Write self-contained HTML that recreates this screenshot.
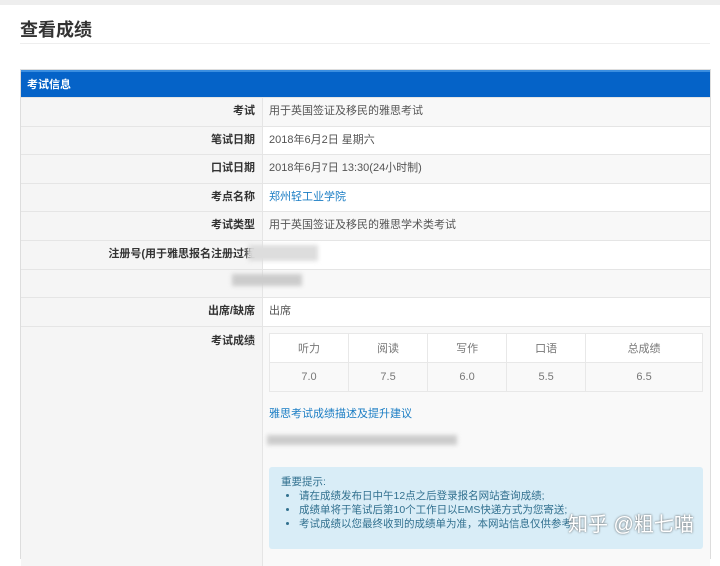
<!DOCTYPE html>
<html><head><meta charset="utf-8"><style>
*{margin:0;padding:0;box-sizing:border-box}
body{width:720px;height:551px;overflow:hidden;background:#fff;font-family:"Liberation Sans","Noto Sans CJK SC",sans-serif;font-size:11px;color:#555}
.top{position:absolute;left:0;top:0;width:720px;height:5px;background:#eee}
h1{position:absolute;left:20px;top:16px;font-size:18px;font-weight:bold;color:#333}
.hr{position:absolute;left:20px;top:43px;width:690px;height:1px;background:#eee}
.panel{position:absolute;left:20px;top:69px;width:691px;height:490px;border:1px solid #ddd;background:#f7f7f7}
.ph{height:27px;background:#0563c8;color:#fff;font-weight:bold;font-size:11px;line-height:27px;padding-left:6px;border-top:2px solid #3a8ee0}
.row{position:relative;height:28.6px;border-top:1px solid #e5e5e5;display:flex}
.l{width:242px;background:#f5f5f5;text-align:right;padding-right:7px;font-weight:bold;color:#333;line-height:27px;border-right:1px solid #e5e5e5}
.v{flex:1;padding-left:6px;line-height:27px;background:#fff}
.row.a .v{background:#f8f8f8}
a{color:#1a7dc4;text-decoration:none}
table{border-collapse:collapse;position:absolute;left:248px;top:6px;width:434px;background:#fff}
td{border:1px solid #e8e8e8;height:29px;text-align:center;color:#777}
.blur{position:absolute;background:#ccc;filter:blur(2px)}
.info{position:absolute;left:248px;top:140px;width:434px;height:82px;background:#d9edf7;border-radius:3px;padding:8px 12px;color:#31708f;font-size:10.5px;line-height:14px}
.info ul{padding-left:18px}
</style></head><body>
<div class="top"></div>
<h1>查看成绩</h1>
<div class="hr"></div>
<div class="panel">
<div class="ph">考试信息</div>
<div class="row a"><div class="l">考试</div><div class="v">用于英国签证及移民的雅思考试</div></div>
<div class="row"><div class="l">笔试日期</div><div class="v">2018年6月2日 星期六</div></div>
<div class="row a"><div class="l">口试日期</div><div class="v">2018年6月7日 13:30(24小时制)</div></div>
<div class="row"><div class="l">考点名称</div><div class="v"><a>郑州轻工业学院</a></div></div>
<div class="row a"><div class="l">考试类型</div><div class="v">用于英国签证及移民的雅思学术类考试</div></div>
<div class="row"><div class="l">注册号(用于雅思报名注册过程</div><div class="v"></div></div>
<div class="row a"><div class="l"></div><div class="v"></div></div>
<div class="row"><div class="l">出席/缺席</div><div class="v">出席</div></div>
<div class="row a" style="height:240px"><div class="l" style="line-height:28px">考试成绩</div><div class="v" style="position:relative;background:#f9f9f9">
</div>
<table style="left:248px"><tr><td>听力</td><td>阅读</td><td>写作</td><td>口语</td><td>总成绩</td></tr><tr style="background:#f9f9f9"><td>7.0</td><td>7.5</td><td>6.0</td><td>5.5</td><td>6.5</td></tr></table>
<div style="position:absolute;left:248px;top:78px;font-size:11px"><a>雅思考试成绩描述及提升建议</a></div>
<div class="blur" style="left:246px;top:108px;width:190px;height:10px"></div>
<div class="info">重要提示:<ul><li>请在成绩发布日中午12点之后登录报名网站查询成绩;</li><li>成绩单将于笔试后第10个工作日以EMS快递方式为您寄送;</li><li>考试成绩以您最终收到的成绩单为准，本网站信息仅供参考。</li></ul></div>
</div>
</div>
<div class="blur" style="left:248px;top:245px;width:70px;height:16px;background:#ddd"></div>
<div class="blur" style="left:232px;top:274px;width:70px;height:12px;background:#ccc"></div>
<div style="position:absolute;left:568px;top:508px;font-size:20px;color:#fff;text-shadow:0 0 2px #555">知乎 @粗七喵</div>
</body></html>
